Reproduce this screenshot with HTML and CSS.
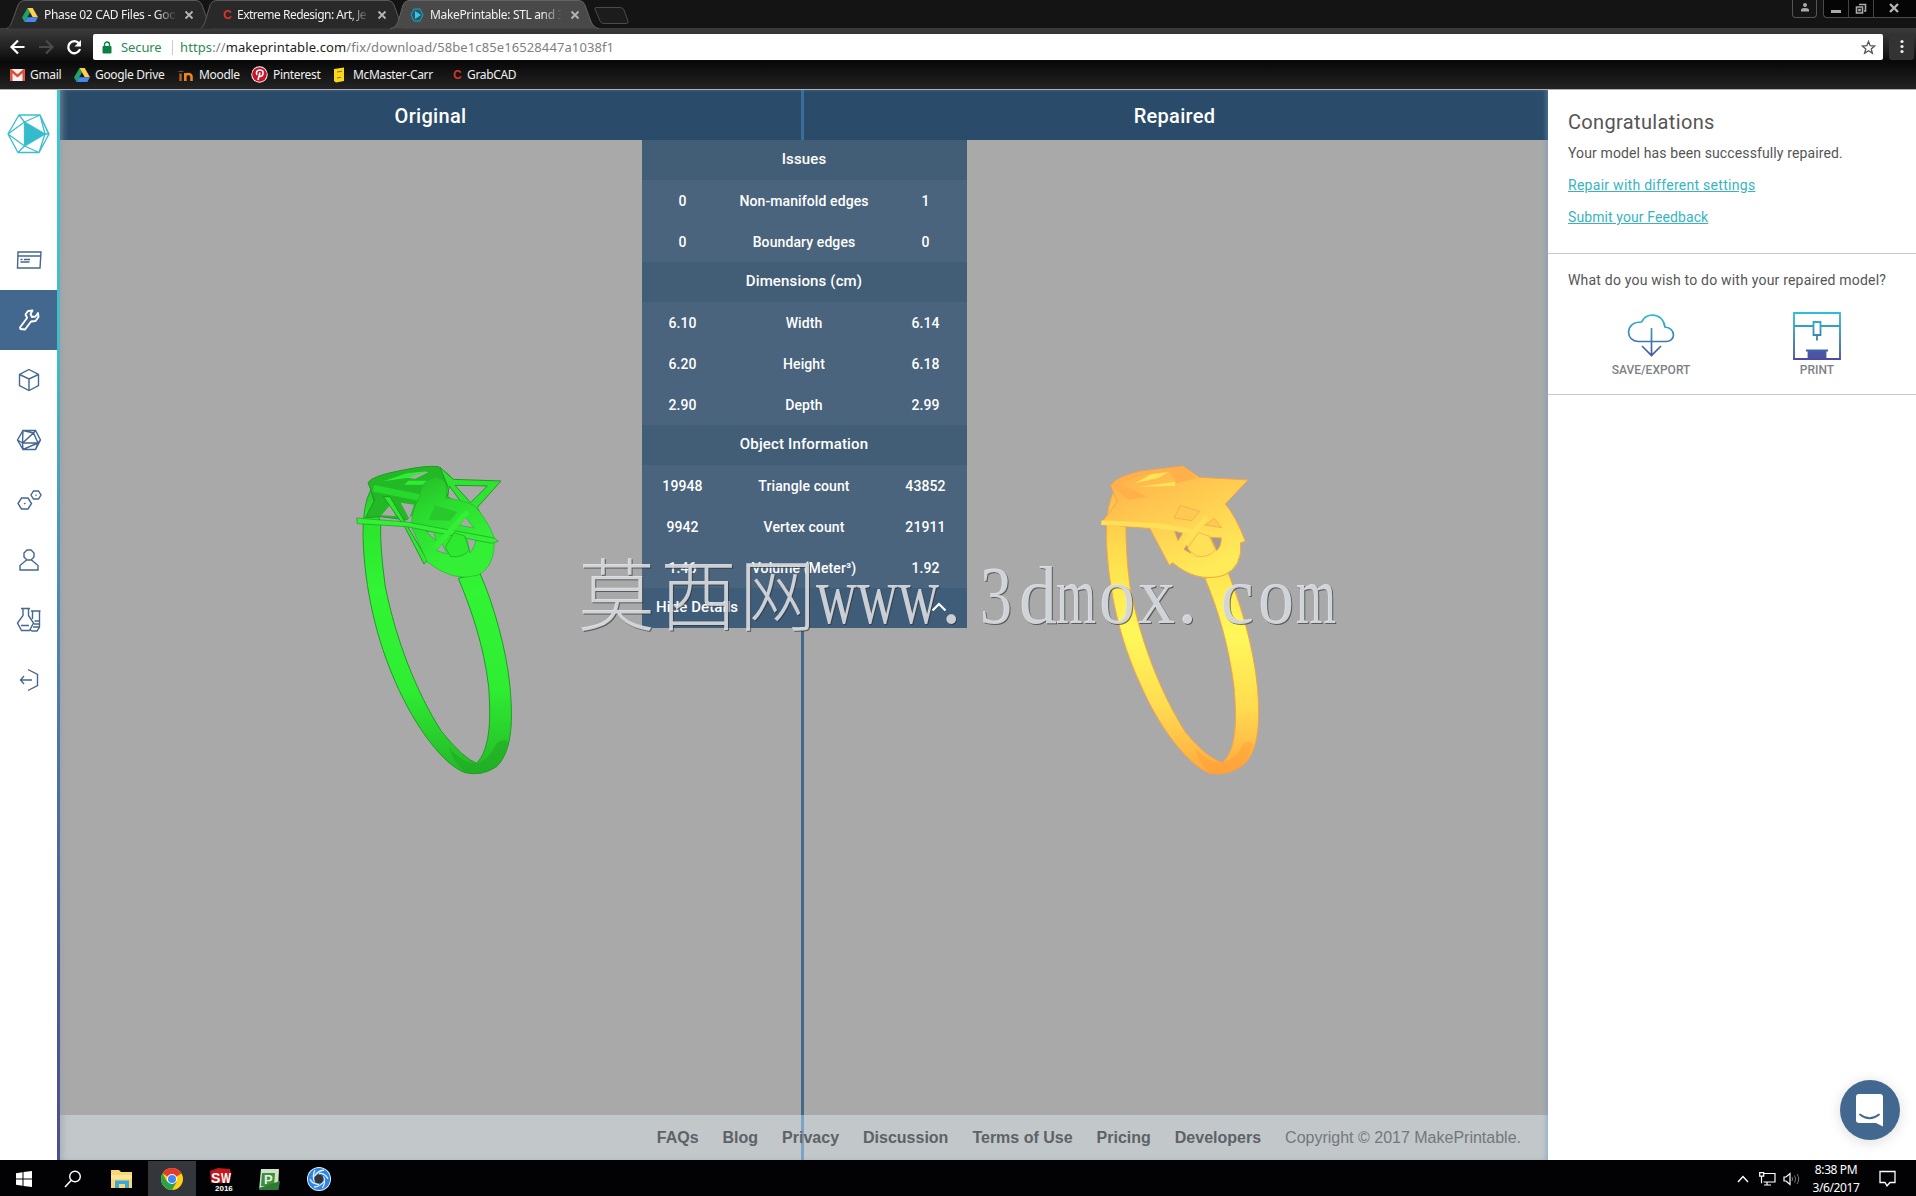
FILE: index.html
```html
<!DOCTYPE html>
<html lang="en">
<head>
<meta charset="UTF-8" />
<meta name="viewport" content="width=device-width, initial-scale=1" />
<title>MakePrintable: STL and 3D file repair</title>
<link rel="stylesheet" href="styles.css">
</head>
<body>
<!-- shared icons -->
<svg class="defs" width="0" height="0">
  <defs>
    <symbol id="drive" viewBox="0 0 16 16">
      <path fill="#1fa463" d="M5.5 1 0 10.5 2.6 15 8 5.5z"/>
      <path fill="#ffd04b" d="M5.5 1h5.2L16 10.3h-5.2z"/>
      <path fill="#4688f4" d="M2.6 15 5.3 10.3H16L13.3 15z"/>
    </symbol>
    <symbol id="close" viewBox="0 0 10 10">
      <path d="M1.5 1.5l7 7M8.5 1.5l-7 7" stroke="#b5b5b5" stroke-width="1.8" fill="none"/>
    </symbol>
    <linearGradient id="cyan-indigo" gradientUnits="userSpaceOnUse" x1="0" y1="0" x2="0" y2="48">
      <stop offset="0" stop-color="#27c4d0"/>
      <stop offset="1" stop-color="#4a4a9c"/>
    </linearGradient>
    <linearGradient id="green" gradientUnits="userSpaceOnUse" x1="0" y1="50" x2="0" y2="970">
      <stop offset="0" stop-color="#1fb022"/>
      <stop offset=".15" stop-color="#2be22d"/>
      <stop offset=".4" stop-color="#31f434"/>
      <stop offset=".72" stop-color="#2fee32"/>
      <stop offset="1" stop-color="#24b828"/>
    </linearGradient>
    <linearGradient id="green-head" gradientUnits="userSpaceOnUse" x1="180" y1="60" x2="330" y2="330">
      <stop offset="0" stop-color="#22b325"/>
      <stop offset=".5" stop-color="#2bdc2e"/>
      <stop offset="1" stop-color="#33f036"/>
    </linearGradient>
    <linearGradient id="gold" gradientUnits="userSpaceOnUse" x1="0" y1="50" x2="0" y2="970">
      <stop offset="0" stop-color="#ffb04a"/>
      <stop offset=".15" stop-color="#ffc84c"/>
      <stop offset=".35" stop-color="#ffe650"/>
      <stop offset=".55" stop-color="#fff85a"/>
      <stop offset=".78" stop-color="#ffdc50"/>
      <stop offset="1" stop-color="#ffa940"/>
    </linearGradient>
    <linearGradient id="gold-head" gradientUnits="userSpaceOnUse" x1="200" y1="60" x2="340" y2="370">
      <stop offset="0" stop-color="#ffb54b"/>
      <stop offset=".4" stop-color="#ffcb50"/>
      <stop offset="1" stop-color="#ffea58"/>
    </linearGradient>
  </defs>
</svg>

<header class="browser">
  <div class="tab-strip">
    <svg class="tab-shapes" width="640" height="29" viewBox="0 0 640 29">
      <path class="tab-shape" d="M6 28.500C10 28 11 24 13 19L18 5Q20 .5 24 .5H196Q200 .5 202 5L207 19Q210 28 214 28.500"/>
      <path class="tab-shape" d="M201 28.500C204 26 205 22 206 19L210 5Q212 .5 216 .5H388Q392 .5 394 5L399 19Q402 28 406 28.500"/>
      <path class="tab-shape on" d="M390 28.500C396 28 397 24 399 19L403 5Q405 .5 409 .5H579Q583 .5 585 5L590 19Q593 28 599 28.500"/>
      <path class="tab-shape new" d="M596 7.500H620Q623 7.500 624 10L628 21Q629 23.500 626 23.500H604Q601 23.500 600 21L595 9Q594.500 7.500 596 7.500z"/>
    </svg>
    <div class="tab tab-1">
      <svg class="fav" width="16" height="16"><use href="#drive"/></svg>
      <span class="tab-title">Phase 02 CAD Files - Goo</span>
      <svg class="x" width="10" height="10"><use href="#close"/></svg>
    </div>
    <div class="tab tab-2">
      <span class="fav grab">C</span>
      <span class="tab-title">Extreme Redesign: Art, Je</span>
      <svg class="x" width="10" height="10"><use href="#close"/></svg>
    </div>
    <div class="tab tab-3">
      <svg class="fav" width="14" height="14" viewBox="0 0 14 14"><path d="M4 1h6l3 6-3 6H4L1 7z" fill="#1c5c70" stroke="#2b9fb8"/><path d="M5 3l6 4-6 4z" fill="#42c4e0"/></svg>
      <span class="tab-title">MakePrintable: STL and 3</span>
      <svg class="x" width="10" height="10"><use href="#close"/></svg>
    </div>
    <div class="win-user"><svg width="10" height="9" viewBox="0 0 10 9"><circle cx="5" cy="2" r="2" fill="#aaa"/><path d="M1 8.500V7q0-2 4-2t4 2v1.500z" fill="#aaa"/></svg></div>
    <div class="win-buttons">
      <span class="wb"><svg width="10" height="10"><path d="M0 7h10v3H0z" fill="#aaa"/></svg></span>
      <span class="wb"><svg width="12" height="11" viewBox="0 0 12 11"><path d="M4 1.500h6.500V8H9M1.500 4H7.500v6H1.500zM4 6.500h1v1H4z" fill="none" stroke="#aaa" stroke-width="1.600"/></svg></span>
      <span class="wb wide"><svg width="10" height="10" viewBox="0 0 10 10"><path d="M1 1l8 8M9 1l-8 8" stroke="#b4b4b4" stroke-width="2.400"/></svg></span>
    </div>
  </div>

  <div class="toolbar">
    <svg class="nav-arrows" width="84" height="26" viewBox="0 0 84 26">
      <path d="M24.500 13H12M18 6.500 11.500 13 18 19.500" fill="none" stroke="#fff" stroke-width="2.200"/>
      <path d="M39 13h12.500M46 6.500 52.500 13 46 19.500" fill="none" stroke="#4a4a4a" stroke-width="2.200"/>
      <path d="M79 9.500A6 6 0 1 0 80 15" fill="none" stroke="#fff" stroke-width="2.300"/>
      <path d="M81 6v6.500h-6.500z" fill="#fff"/>
    </svg>
    <div class="omnibox">
      <svg width="10" height="13" viewBox="0 0 10 13"><rect y="5" x=".5" width="9" height="7.500" rx="1" fill="#0b8043"/><path d="M2.500 6V3.500a2.500 2.500 0 0 1 5 0V6" fill="none" stroke="#0b8043" stroke-width="1.400"/></svg>
      <span class="secure">Secure</span>
      <span class="url"><span class="https">https</span>://<b>makeprintable.com</b>/fix/download/58be1c85e16528447a1038f1</span>
      <svg class="star" width="15" height="15" viewBox="0 0 15 15"><path d="M7.500 1.500l1.700 4.200 4.500.3-3.500 2.900 1.200 4.400-3.900-2.500-3.900 2.500 1.200-4.400L1.300 6l4.500-.3z" fill="none" stroke="#555" stroke-width="1.300"/></svg>
    </div>
    <div class="menu-btn"><svg width="4" height="16"><circle cx="2" cy="2.500" r="1.600" fill="#eee"/><circle cx="2" cy="7.500" r="1.600" fill="#eee"/><circle cx="2" cy="12.500" r="1.600" fill="#eee"/></svg></div>
  </div>

  <div class="bookmarks">
    <span class="bm bm-gmail"><svg width="15" height="12" viewBox="0 0 15 12"><rect width="15" height="12" rx="1" fill="#f4f0ee"/><path d="M1.300 12V1.500L7.500 7l6.200-5.500V12" fill="none" stroke="#dd4b39" stroke-width="2.400"/></svg>Gmail</span>
    <span class="bm bm-drive"><svg width="16" height="16"><use href="#drive"/></svg>Google Drive</span>
    <span class="bm bm-moodle"><svg width="17" height="14" viewBox="0 0 17 14"><path d="M0 4l4-1.500L8 4z" fill="#555"/><path d="M3.500 13V5.500" stroke="#b5621c" stroke-width="2.400"/><path d="M8.300 13V5M8.300 13V8.500Q8.500 6 11.300 6T14.500 8.500V13" fill="none" stroke="#ee8322" stroke-width="2.600"/></svg>Moodle</span>
    <span class="bm bm-pin"><svg width="17" height="17" viewBox="0 0 17 17"><circle cx="8.500" cy="8.500" r="8.200" fill="#fff"/><circle cx="8.500" cy="8.500" r="7.300" fill="#c8142b"/><path d="M7 14l2-7.500M5.800 9Q4.500 4 8.800 4q4 .3 3.200 3.800T8.200 10" fill="none" stroke="#fff" stroke-width="1.600"/></svg>Pinterest</span>
    <span class="bm bm-mcm"><svg width="13" height="16" viewBox="0 0 13 16"><path d="M1 2l10-1.500V14L3 15.500 1 14z" fill="#f9d71c"/><path d="M4 5l5-.8M4 11l4-.6" stroke="#8a7410" stroke-width="1"/></svg>McMaster-Carr</span>
    <span class="bm bm-grab"><i class="grab">C</i>GrabCAD</span>
  </div>
</header>

<div class="app">
  <aside class="sidebar">
    <svg class="logo" width="43" height="40" viewBox="0 0 43 40" fill="none" stroke="#3dbecb" stroke-width="1.300">
      <path d="M12 1h21l9 19-10 18.500H11L1 20zM12 1 33 1 41.500 20M17.500 8 12 1M17.500 8 1 20M17.500 8 33 1M17.500 32 1 20M17.500 32 11 38.500M17.500 32l14.500 6.500M38 20l-6 18.500M38 20 33 1M38 20h4"/>
      <path d="M17.500 8 38 20 17.500 32z" fill="#35bccc"/>
    </svg>
    <nav class="side-nav">
      <a><svg viewBox="0 0 26 26"><path d="M2 5h23l-1 16H1.500zM2 9h22.500M4.500 12.500h2M8 12.500h6M4.500 15h9"/></svg></a>
      <a class="active"><svg viewBox="0 0 26 26"><path stroke-width="1.900" stroke-linejoin="round" d="M11 10.500 9.500 7.500 12 4l4.500-.5L14.500 7l1.500 3 3.500-.5L22 6l.5 4-3 4-4.500.5-6 8L4.500 22 4 20.500 11 11z"/></svg></a>
      <a><svg viewBox="0 0 26 26"><path d="M13 2.500l9.500 5v11L13 23.500l-9.500-5v-11zM3.500 7.500 13 12l9.500-4.500M13 12v11.500"/></svg></a>
      <a><svg viewBox="0 0 26 26"><path d="M7 3.500h12.500L24.500 13l-5 9.500H7L1.500 13zM17.500 6 7 3.500 6.500 16 17.500 6 22 16zM6.500 16 22 16 7 22.500zM1.500 13l5 3M1.500 13 7 3.500M17.500 6l2-2.500M22 16l2.500-3M22 16l-2.500 6.500"/></svg></a>
      <a><svg viewBox="0 0 26 26"><path d="M5.500 11h6.500l3.500 5.500-3.500 5.500H5.500L2 16.500zM17.500 4h5l2.500 4-2.500 4h-5L15 8zM8 17l1.500-1M19.500 8.500 20.500 8"/></svg></a>
      <a><svg viewBox="0 0 26 26"><path d="M11 3h4l3 3v4l-3 3h-4L8 10V6zM10.500 13 4 18.500V23h18v-4.500L15.500 13"/></svg></a>
      <a><svg viewBox="0 0 26 26"><path d="M5 1.500h9M7 1.500v7L1.500 16l4 7.500h8L17.500 16 12.500 8.500v-7M5 18.500h8M15 4h9.500M16.500 4v8M23.500 4v16L21 24h-5l-2-1.500M18.500 14h5M18 17h5.500M17 20h6"/></svg></a>
      <a><svg viewBox="0 0 26 26"><path d="M12 2.500l9.500 5v11L12 23.500M4.500 13H16M8 9l-3.500 4L8 17"/></svg></a>
    </nav>
  </aside>
  <div class="edge"></div>

  <main class="viewer">
    <section class="pane">
      <h2 class="pane-title">Original</h2>
      <svg class="model" viewBox="0 50 741 970" width="741" height="970">
        <g transform="translate(280 360) scale(.3333)" stroke="#239a27" stroke-width="3" stroke-linejoin="round">
          <!-- band -->
          <path fill="url(#green)" fill-rule="evenodd" d="M92 120Q68 165 69 260C74 420 110 570 168 700 225 830 310 945 375 968Q425 980 470 950C520 900 518 800 510 710 500 600 460 460 420 370L355 385C395 480 432 590 446 710 454 820 448 900 410 940Q370 925 305 845C228 725 168 570 136 410Q120 300 122 220z"/>
          <path fill="#1fa823" stroke="none" opacity=".55" d="M325 890Q370 945 418 938 450 925 470 880 500 860 505 880 490 945 460 955 420 975 380 968 350 955 325 890z"/>
          <!-- back of the head -->
          <path fill="#23b826" d="M84 98Q95 78 180 62 260 45 296 50L330 78 322 150 250 160 200 210 122 200 76 203 104 150z"/>
          <path fill="#a9a9a9" stroke="none" d="M190 82 232 66 266 66 226 86z"/>
          <path fill="#30ed33" stroke="none" d="M130 94 200 70 262 64 200 84zM205 92h72v12h-84z"/>
          <!-- star bars -->
          <path fill="none" stroke="#29d82c" stroke-width="20" d="M100 115 400 175"/>
          <path fill="#2ee331" fill-rule="evenodd" d="M300 52 340 88 483 93 412 172 425 200 380 180 318 145 322 105zM345 106 392 158 442 108zM328 108 322 140 372 168z"/>
          <path fill="#a9a9a9" stroke="none" d="M124 196 150 166 168 198zM182 158 222 164 208 206z"/>
          <path fill="#2ee831" d="M130 140 150 140 262 330 252 342 195 232z"/>
          <!-- disc -->
          <path fill="url(#green-head)" stroke="#27b32a" stroke-width="2" fill-rule="evenodd" d="M290 82Q240 90 240 140 214 180 214 230L262 336Q340 398 412 376 468 350 462 262 440 205 402 166 350 145 318 145 330 90 290 82zM258 244l24 3 5 24zM290 302l16-22 16 32zM358 226l18-24 26 32zM380 262l28 2q-2 26-18 45z"/>
          <path fill="#27ca2a" stroke="none" d="M284 166 352 186 330 212 266 210z"/>
          <path fill="#33ef36" d="M50 204 200 216 462 264 475 274 455 280 200 230 52 221z" stroke-width="2"/>
          <path fill="none" stroke="#33ef36" stroke-width="16" d="M286 292 384 184"/>
          <path fill="#2dea30" stroke-width="2" d="M342 248l32 10 14 42q-18 24-56 20l-16-28z"/>
        </g>
      </svg>
    </section>
    <div class="divider"></div>
    <section class="pane">
      <h2 class="pane-title">Repaired</h2>
      <svg class="model" viewBox="0 50 744 970" width="744" height="970">
        <g transform="translate(276 360) scale(.3333)" stroke="#f2a548" stroke-width="3" stroke-linejoin="round">
          <!-- band -->
          <path fill="url(#gold)" fill-rule="evenodd" d="M104 120Q78 165 79 260C84 420 120 570 180 700 240 840 330 950 390 970Q440 980 490 945C540 900 540 800 532 710 522 600 485 470 445 370L375 385C415 480 447 590 462 710 472 820 468 900 428 938Q380 925 315 845C240 725 180 570 150 410Q136 300 138 220z"/>
          <path fill="#ff9a35" stroke="none" opacity=".45" d="M345 895Q390 945 435 935 470 925 490 880 515 870 520 885 500 945 478 955 430 980 395 968 365 955 345 895z"/>
          <!-- head -->
          <path fill="url(#gold-head)" d="M92 106Q110 80 180 64L308 48 358 82 504 90 436 162Q468 200 496 274L482 278Q488 350 432 376 350 400 278 338L268 346 210 236 62 222 112 155z"/>
          <path fill="#ffb04a" stroke="none" d="M94 106Q110 82 180 66L308 50 352 84 290 100 270 66 200 72 120 100 200 140 145 150z"/>
          <path fill="#ffe458" stroke="none" d="M165 100 215 72 265 66 235 84zM175 110l110-14v12z"/>
          <path fill="none" stroke="#ffe058" stroke-width="14" d="M64 218 225 226 430 258M310 285l72-85"/>
          <path fill="#ffc850" stroke-width="2" d="M300 166l60 18-25 28-52-8zM375 225l28-20 22 28z"/>
          <path fill="#a09a92" d="M284 244l24 6-14 22zM312 298l8-12 12 24zM392 262l32 2q0 25-14 38z"/>
          <path fill="#ffe158" stroke-width="2" d="M355 248l32 10 20 42q-22 26-60 18l-24-22z"/>
        </g>
      </svg>
    </section>

    <div class="details">
      <h3>Issues</h3>
      <div class="row"><span>0</span><span>Non-manifold edges</span><span>1</span></div>
      <div class="row"><span>0</span><span>Boundary edges</span><span>0</span></div>
      <h3>Dimensions (cm)</h3>
      <div class="row"><span>6.10</span><span>Width</span><span>6.14</span></div>
      <div class="row"><span>6.20</span><span>Height</span><span>6.18</span></div>
      <div class="row"><span>2.90</span><span>Depth</span><span>2.99</span></div>
      <h3>Object Information</h3>
      <div class="row"><span>19948</span><span>Triangle count</span><span>43852</span></div>
      <div class="row"><span>9942</span><span>Vertex count</span><span>21911</span></div>
      <div class="row"><span>1.46</span><span>Volume (Meter³)</span><span>1.92</span></div>
      <div class="hide">Hide Details
        <svg width="16" height="10" viewBox="0 0 16 10"><path d="M1.500 8.500 8 2l6.500 6.500" fill="none" stroke="#fff" stroke-width="2.200"/></svg>
      </div>
    </div>

    <footer class="foot">
      <a>FAQs</a><a>Blog</a><a>Privacy</a><a>Discussion</a><a>Terms of Use</a><a>Pricing</a><a>Developers</a>
      <span>Copyright © 2017 MakePrintable.</span>
    </footer>
  </main>

  <aside class="result">
    <section class="box">
      <h1>Congratulations</h1>
      <p class="msg">Your model has been successfully repaired.</p>
      <a class="link link-repair">Repair with different settings</a>
      <a class="link link-feedback">Submit your Feedback</a>
    </section>
    <section class="box next">
      <p class="ask">What do you wish to do with your repaired model?</p>
      <div class="actions">
        <div class="action">
          <svg width="48" height="48" viewBox="0 0 48 48" fill="none" stroke="url(#cyan-indigo)" stroke-width="1.700"><path d="M11.500 29.500Q2 29 1.500 20 2.500 10 14.500 10 18 3 25.500 3 36 3.500 38 15 46 16 46.500 23 46 29 39.500 29.500zM24.500 16v27M15 34l9.500 9.500L34 34"/></svg>
          <span>SAVE/EXPORT</span>
        </div>
        <div class="action">
          <svg width="48" height="48" viewBox="0 0 48 48" fill="none" stroke="url(#cyan-indigo)" stroke-width="1.800"><path d="M1 1h46v46H1zM1 14h19.500M27.500 14H47M20.500 10h7v13h-7zM24 23v5.500M13 38.500h22"/><path d="M15.500 39h17v8h-17z" fill="#4b55a4"/></svg>
          <span>PRINT</span>
        </div>
      </div>
    </section>
  </aside>
</div>

<div class="chat">
  <svg width="30" height="34" viewBox="0 0 30 34"><path d="M4 1h21q3 0 3 3v29.500L21 30H4q-3 0-3-3V4q0-3 3-3z" fill="#fff"/><path d="M5 21.500q9.500 7.500 19 0" fill="none" stroke="#42688f" stroke-width="1.800" stroke-linecap="round"/></svg>
</div>

<!-- watermark over the viewer -->
<svg class="watermark" width="780" height="110" viewBox="0 0 780 110">
  <g class="wm-cjk"><text x="8" y="85" textLength="77" lengthAdjust="spacingAndGlyphs">莫</text><text x="90" y="85" textLength="77" lengthAdjust="spacingAndGlyphs">西</text><text x="169" y="85" textLength="77" lengthAdjust="spacingAndGlyphs">网</text></g>
  <g class="wm-latin">
    <text x="246" y="83" textLength="123" lengthAdjust="spacingAndGlyphs">www</text>
    <text x="371" y="83">.</text>
    <text x="410" y="83" textLength="32" lengthAdjust="spacingAndGlyphs">3</text>
    <text x="449" y="83" textLength="38" lengthAdjust="spacingAndGlyphs">d</text>
    <text x="486" y="83" textLength="40" lengthAdjust="spacingAndGlyphs">m</text>
    <text x="529" y="83" textLength="36" lengthAdjust="spacingAndGlyphs">o</text>
    <text x="568" y="83" textLength="37" lengthAdjust="spacingAndGlyphs">x</text>
    <text x="607" y="83">.</text>
    <text x="650" y="83" textLength="34" lengthAdjust="spacingAndGlyphs">c</text>
    <text x="688" y="83" textLength="36" lengthAdjust="spacingAndGlyphs">o</text>
    <text x="726" y="83" textLength="40" lengthAdjust="spacingAndGlyphs">m</text>
  </g>
</svg>

<div class="taskbar">
  <span class="tb"><svg width="16" height="16" viewBox="0 0 16 16"><path d="M0 2.300 6.500 1.300v6.200H0zM7.500 1.100 16 0v7.500H7.500zM0 8.500h6.500v6.200L0 13.800zM7.500 8.500H16V16l-8.500-1.100z" fill="#fff"/></svg></span>
  <span class="tb"><svg width="18" height="18" viewBox="0 0 18 18"><circle cx="11" cy="6.500" r="5.300" fill="none" stroke="#fff" stroke-width="1.400"/><path d="M7 10.500 1 17" stroke="#fff" stroke-width="1.600"/></svg></span>
  <span class="tb"><svg width="22" height="20" viewBox="0 0 22 20"><path d="M0 1h8l2 2h11v16H0z" fill="#f8d775"/><path d="M0 6h21v4H0z" fill="#fce69c"/><path d="M4 19v-7.500h14V19h-4v-4H8v4z" fill="#3fa7d6"/></svg></span>
  <span class="tb on"><svg width="22" height="22" viewBox="0 0 22 22"><circle cx="11" cy="11" r="11" fill="#fcd116"/><path d="M11 11 1.500 5.500A11 11 0 0 1 20.500 5.500z" fill="#e33b2e"/><path d="M1.500 5.500A11 11 0 0 0 11 22l4.800-8.300-9.600 0z" fill="#2ba24c"/><circle cx="11" cy="11" r="5" fill="#fff"/><circle cx="11" cy="11" r="4" fill="#4285f4"/></svg></span>
  <span class="tb"><svg width="24" height="23" viewBox="0 0 24 23"><path d="M1 3 9 0l12 1 1 4-2 10H2z" fill="#c4161c"/><text x="2" y="15" class="sw">S</text><text x="12" y="15" class="sw" textLength="10" lengthAdjust="spacingAndGlyphs">W</text><text x="6" y="22.500" class="yr">2016</text></svg></span>
  <span class="tb"><svg width="21" height="21" viewBox="0 0 21 21"><path d="M2 0h18l-1 21H0z" fill="#cfe3c8"/><path d="M3 4h13l-1 13H2z" fill="#3f8f3c"/><path d="M0 19l21-7-1.500 9H0z" fill="#2c7a36"/><text x="5" y="15" class="pp">P</text></svg></span>
  <span class="tb"><svg width="24" height="24" viewBox="0 0 24 24"><circle cx="12" cy="12" r="12" fill="#e8f4ff"/><circle cx="12" cy="12" r="7.700" fill="none" stroke="#2c86e8" stroke-width="6.800"/><path d="M7.500 9.500Q10 4 17 3M12 6.500Q18 6 21 12M16.500 9.500Q19 15 15.500 21M16.500 14.500Q13 20 7 20M12 17.500Q5 17 3 12M7.500 14.500Q5 9 8 3" stroke="#e3f1ff" stroke-width="1.300" fill="none"/><circle cx="12" cy="12" r="4.600" fill="#333"/></svg></span>
  <div class="tray">
    <svg width="12" height="8" viewBox="0 0 12 8"><path d="M1 7l5-5.500L11 7" fill="none" stroke="#fff" stroke-width="1.400"/></svg>
    <svg width="17" height="14" viewBox="0 0 17 14"><path d="M4 1.500h12v8.500H4.500M.7.700h4v3.500h-4zM2.500 4.200v7M8 10v2.500M5 13h7" fill="none" stroke="#fff" stroke-width="1.200"/></svg>
    <svg width="17" height="14" viewBox="0 0 17 14"><path d="M1 5h2l4-3.500v11L3 9H1z" fill="none" stroke="#fff" stroke-width="1.200"/><path d="M9 5q1.500 2 0 4M11.500 3.500q2.500 3.500 0 7M14 2q3.500 5 0 10" fill="none" stroke="#777"/></svg>
    <div class="clock"><span>8:38 PM</span><span>3/6/2017</span></div>
    <svg width="17" height="17" viewBox="0 0 17 17"><path d="M1 1.500h15v11h-5L8 15.800 6 12.500H1z" fill="none" stroke="#fff" stroke-width="1.300"/></svg>
  </div>
</div>
</body>
</html>
```

FILE: styles.css
```css
* {
  box-sizing: border-box;
}
body {
  margin: 0;
  width: 1916px;
  height: 1196px;
  overflow: hidden;
  display: flex;
  flex-direction: column;
  font-family: Roboto, "Noto Sans", sans-serif;
  background: #fff;
}
h1, h2, h3, p {
  margin: 0;
}
svg {
  flex-shrink: 0;
}
.defs {
  position: absolute;
}

/* browser chrome */
.browser {
  height: 90px;
  background: #111;
  border-bottom: 1px solid #b0b0b0;
  font-family: "Noto Sans", "Open Sans", sans-serif;
  font-size: 12px;
  color: #f0f0f0;
}
.tab-strip {
  position: relative;
  height: 28px;
  display: flex;
  background: #141414;
}
.tab-shapes {
  position: absolute;
  left: 0;
  top: 0;
}
.tab-shape {
  fill: #292929;
  stroke: #5a5a5a;
}
.tab-shape.on {
  fill: #494949;
  stroke: #626262;
}
.tab-shape.new {
  fill: #1c1c1c;
  stroke: #4a4a4a;
}
.tab {
  position: relative;
  display: flex;
  align-items: center;
  height: 29px;
}
.tab-1 { width: 205px; padding-left: 22px; }
.tab-2 { width: 193px; padding-left: 18px; }
.tab-3 { width: 200px; padding-left: 12px; }
.tab-title {
  width: 131px;
  margin-left: 6px;
  overflow: hidden;
  white-space: nowrap;
  letter-spacing: -0.3px;
  -webkit-mask-image: linear-gradient(90deg, #000 112px, transparent 133px);
}
.tab-2 .tab-title {
  margin-left: 5px;
  letter-spacing: -0.5px;
}
.tab-3 .tab-title {
  letter-spacing: -0.35px;
}
.tab .x {
  margin-left: 9px;
}
.grab {
  color: #d8352a;
  font: bold 12px "Liberation Sans", sans-serif;
  width: 9px;
}
.win-user {
  width: 25px;
  height: 18px;
  margin-left: auto;
  border: 1px solid #555;
  border-top: 0;
  border-radius: 0 0 4px 4px;
  display: flex;
  justify-content: center;
  align-items: center;
  padding-bottom: 2px;
}
.win-buttons {
  display: flex;
  margin-left: 6px;
  height: 18px;
  border: 1px solid #4a4a4a;
  border-width: 0 0 1px 1px;
  border-radius: 0 0 0 4px;
  background: #050505;
}
.wb {
  width: 25px;
  display: flex;
  justify-content: center;
  align-items: center;
  padding-bottom: 1px;
  border-right: 1px solid #444;
}
.wb.wide {
  width: 42px;
  padding-right: 3px;
  border: 0;
}
.toolbar {
  height: 33px;
  padding: 6px 2px 0 0;
  display: flex;
  background: linear-gradient(#3c3c3c, #1c1c1c 70%, #0a0a0a);
}
.omnibox {
  margin-left: 9px;
  width: 1790px;
  height: 26px;
  background: #fff;
  border-radius: 2px;
  display: flex;
  align-items: center;
  padding: 0 7px 0 9px;
}
.secure {
  margin-left: 9px;
  padding-right: 9px;
  width: 52px;
  line-height: 15px;
  border-right: 1px solid #ccc;
  color: #2c8a57;
  font-size: 13px;
  letter-spacing: -0.1px;
}
.url {
  margin-left: 7px;
  color: #808080;
  font-size: 13px;
  letter-spacing: 0.1px;
}
.url .https {
  color: #2c8a57;
}
.url b {
  color: #222;
  font-weight: 400;
}
.star {
  margin-left: auto;
}
.menu-btn {
  width: 25px;
  height: 26px;
  margin-left: auto;
  background: #333;
  border-radius: 3px;
  display: flex;
  align-items: center;
  justify-content: center;
}
.bookmarks {
  height: 28px;
  padding: 0 0 1px 10px;
  display: flex;
  align-items: center;
  background: linear-gradient(#080808, #232323);
}
.bm {
  display: flex;
  align-items: center;
  gap: 5px;
  white-space: nowrap;
  letter-spacing: -0.33px;
}
.bm-gmail { width: 64px; }
.bm-drive { width: 103px; }
.bm-moodle { width: 74px; }
.bm-pin { width: 82px; }
.bm-mcm { width: 120px; gap: 7px; }

/* app */
.app {
  height: 1070px;
  display: flex;
}
.sidebar {
  width: 57px;
  background: #fff;
}
.logo {
  display: block;
  margin: 24px 0 76px 7px;
}
.side-nav a {
  height: 60px;
  display: flex;
  align-items: center;
  padding-left: 16px;
}
.side-nav svg {
  width: 26px;
  height: 26px;
  fill: none;
  stroke: #456791;
  stroke-width: 1.4;
}
.side-nav .active {
  background: #42688f;
}
.side-nav .active svg {
  stroke: #fff;
}
.edge {
  width: 3px;
  background: linear-gradient(#3cc8cf, #46b9c4 25%, #4a86b0 50%, #4b5a96 80%, #4d4f8c);
}
.viewer {
  position: relative;
  width: 1488px;
  display: flex;
  background: #a9a9a9;
}
.viewer::after {
  content: "";
  position: absolute;
  inset: 0;
  pointer-events: none;
  box-shadow: inset 6px 0 7px -4px rgba(150, 160, 170, 0.7), inset -4px 0 4px -2px rgba(110, 150, 200, 0.5);
}
.pane {
  width: 741px;
}
.divider + .pane {
  width: 744px;
}
.divider {
  width: 3px;
  background: linear-gradient(#3b6d99 50px, #42688c 50px);
}
.pane-title {
  height: 50px;
  line-height: 52px;
  background: #2a4c6a;
  color: #fff;
  text-align: center;
  font-size: 20px;
  font-weight: 500;
  letter-spacing: 0.3px;
}
.divider + .pane .pane-title {
  padding-right: 3px;
}
.model {
  display: block;
}
.details {
  position: absolute;
  left: 582px;
  top: 50px;
  width: 325px;
  color: #fff;
  background: #4a647d;
  font-size: 14px;
  font-weight: 500;
  letter-spacing: 0.1px;
}
.details h3 {
  height: 40px;
  line-height: 38px;
  padding-right: 1px;
  background: #425e77;
  text-align: center;
  font-size: 15px;
  font-weight: 500;
  letter-spacing: 0.15px;
}
.row {
  height: 41px;
  display: grid;
  grid-template-columns: 1fr 2fr 1fr;
  align-items: center;
  text-align: center;
  padding: 1px 1px 0 0;
}
.hide {
  height: 40px;
  padding: 0 20px 3px 14px;
  display: flex;
  justify-content: space-between;
  align-items: center;
  background: #3f5d79;
  font-size: 15px;
}
.foot {
  position: absolute;
  left: 0;
  right: 0;
  bottom: 0;
  height: 45px;
  padding-right: 27px;
  display: flex;
  justify-content: flex-end;
  align-items: center;
  gap: 24px;
  background: linear-gradient(90deg, transparent 741px, #7da3c4 741px, #7da3c4 744px, transparent 744px), #c2c7ca;
  font: 16px "Liberation Sans", Arial, sans-serif;
  color: #73787c;
}
.foot a {
  font-weight: bold;
  color: #5d6266;
}

/* right panel */
.result {
  width: 368px;
  color: #555;
  font-size: 14px;
}
.box {
  padding-left: 20px;
  border-bottom: 1px solid #c8cacc;
}
.box:first-child {
  height: 164px;
  padding-top: 19px;
}
.box h1 {
  font-size: 20px;
  font-weight: 400;
  line-height: 26px;
  letter-spacing: 0.35px;
}
.msg {
  margin-top: 8px;
  line-height: 20px;
  letter-spacing: 0.12px;
}
.link {
  display: table;
  margin-top: 12px;
  line-height: 20px;
  color: #38b4bf;
  text-decoration: underline;
  letter-spacing: 0.28px;
}
.link-feedback {
  letter-spacing: 0.1px;
}
.box.next {
  height: 141px;
  padding-top: 16px;
}
.ask {
  line-height: 20px;
  white-space: nowrap;
  letter-spacing: 0.2px;
}
.actions {
  display: flex;
  margin-top: 22px;
}
.action {
  width: 166px;
  display: flex;
  flex-direction: column;
  align-items: center;
  font-size: 12px;
  line-height: 21px;
  color: #7d8186;
  font-weight: 500;
}
.chat {
  position: absolute;
  left: 1840px;
  top: 1080px;
  width: 60px;
  height: 60px;
  border-radius: 50%;
  background: #42688f;
  box-shadow: 0 2px 14px rgba(0, 0, 0, 0.14);
  display: flex;
  align-items: center;
  justify-content: center;
}

.watermark {
  position: absolute;
  left: 570px;
  top: 540px;
  fill: rgba(224, 228, 232, 0.88);
  filter: drop-shadow(1px 1px 0 rgba(50, 50, 50, 0.75));
}
.wm-cjk {
  font: 300 79px "Noto Sans CJK SC", sans-serif;
}
.wm-latin {
  font: 82px "Liberation Serif", serif;
}

/* windows taskbar */
.taskbar {
  height: 36px;
  display: flex;
  background: #020205;
  color: #fff;
  padding-top: 1px;
}
.tb {
  width: 48px;
  height: 36px;
  margin-right: 1.2px;
  display: flex;
  align-items: center;
  justify-content: center;
}
.tb.on {
  background: #33363b;
}
.sw {
  font: bold 14px "Liberation Sans", sans-serif;
  fill: #fff;
}
.yr {
  font: bold 8px "Liberation Sans", sans-serif;
  fill: #fff;
}
.pp {
  font: bold 13px "Liberation Sans", sans-serif;
  fill: #e7f0e2;
}
.tray {
  margin-left: auto;
  padding-right: 20px;
  display: flex;
  align-items: center;
}
.tray svg:nth-child(2) {
  margin-left: 10px;
}
.tray svg:nth-child(3) {
  margin-left: 7px;
}
.clock {
  width: 66px;
  margin: 1px 10px 0 3px;
  display: flex;
  flex-direction: column;
  align-items: center;
  font: 12px/18px "Noto Sans", sans-serif;
  letter-spacing: -0.4px;
}
```
